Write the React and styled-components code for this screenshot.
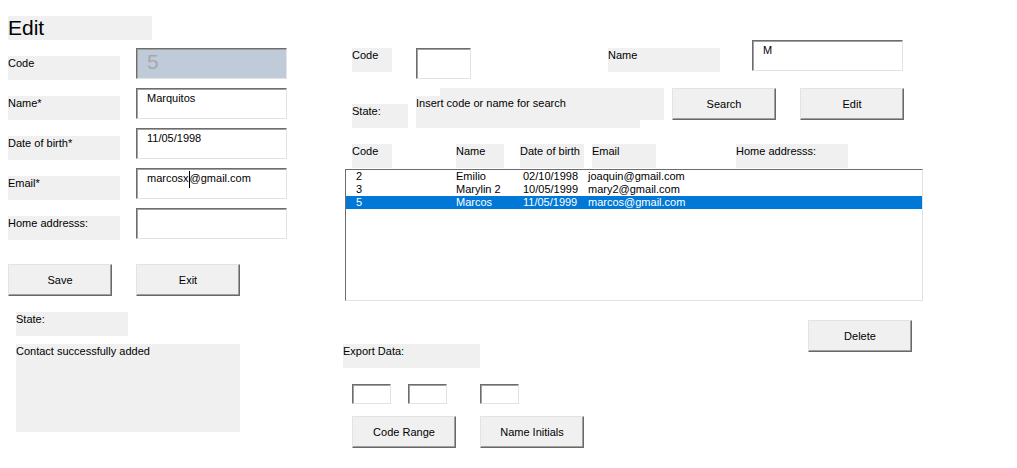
import React from 'react'
import styled, {createGlobalStyle, css} from 'styled-components'

const GlobalStyle = createGlobalStyle`
  html, body {
    margin: 0;
    padding: 0;
    background: #fff;
  }
  body {
    font-family: 'Liberation Sans', Arial, sans-serif;
    font-size: 11px;
    color: #000;
  }
`

// offsets of a control inside its row, as on the original user form
const place = css`
  flex: none;
  box-sizing: border-box;
  margin-left: ${p => p.$ml || 0}px;
  margin-top: ${p => p.$mt || 0}px;
`

const Form = styled.div`
  display: flex;
  width: 1017px;
  height: 468px;
  overflow: hidden;
`
const LeftPane = styled.div`
  width: 335px;
  padding: 16px 0 0 8px;
  display: flex;
  flex-direction: column;
  align-items: flex-start;
`
const RightPane = styled.div`
  flex: 1;
  padding-top: 40px;
  display: flex;
  flex-direction: column;
  align-items: flex-start;
`
const Row = styled.div`
  display: flex;
  align-items: flex-start;
  margin-top: ${p => p.$top || 0}px;
`
const Title = styled.div`
  width: 144px;
  height: 24px;
  background: #f0f0f0;
  font-size: 21px;
  line-height: 24px;
`
const FieldGrid = styled.div`
  margin-top: 8px;
  display: grid;
  grid-template-columns: 112px 151px;
  grid-auto-rows: 31px;
  column-gap: 16px;
  row-gap: 9px;
`
const Label = styled.div`
  ${place}
  width: ${p => p.$w}px;
  height: ${p => p.$h || 24}px;
  padding-top: 1px;
  background: #f0f0f0;
  line-height: 13px;
  white-space: nowrap;
`
const FieldLabel = styled(Label)`
  margin-top: 8px;
`
const StatusBox = styled(Label)`
  box-shadow: 24px -8px 0 #f0f0f0;
`
const TextBox = styled.div`
  ${place}
  width: ${p => p.$w || 151}px;
  height: ${p => p.$h || 31}px;
  padding: 3px 0 0 10px;
  background: ${p => (p.$locked ? '#bfcbd8' : '#fff')};
  border: 1px solid #e3e3e3;
  border-top-color: #6d6d6d;
  border-left-color: #6d6d6d;
  box-shadow: inset 1px 1px 0 #a0a0a0;
  line-height: 13px;
  white-space: nowrap;
`
const LockedValue = styled.span`
  display: block;
  margin-top: -1px;
  font-size: 21px;
  line-height: 21px;
  color: #a8a8a8;
`
const Caret = styled.span`
  display: inline-block;
  width: 1px;
  height: 17px;
  margin-top: -1px;
  vertical-align: top;
  background: #000;
`
const Button = styled.button`
  ${place}
  width: 104px;
  height: 32px;
  padding: 0;
  background: #f0f0f0;
  border: 1px solid;
  border-color: #e3e3e3 #696969 #696969 #e3e3e3;
  box-shadow: inset -1px -1px 0 #a0a0a0;
  font: inherit;
  color: #000;
`
const ListBox = styled.div`
  box-sizing: border-box;
  margin: 1px 0 0 2px;
  width: 578px;
  height: 132px;
  background: #fff;
  border: 1px solid #e3e3e3;
  border-top-color: #6d6d6d;
  border-left-color: #6d6d6d;
`
const ListRow = styled.div`
  display: grid;
  grid-template-columns: 100px 67px 65px 1fr;
  height: 13px;
  padding-left: 10px;
  line-height: 13px;
  white-space: nowrap;
  background: ${p => (p.$selected ? '#0078d7' : 'transparent')};
  color: ${p => (p.$selected ? '#fff' : '#000')};
`

const contacts = [
  {code: 2, name: 'Emilio', birth: '02/10/1998', email: 'joaquin@gmail.com'},
  {code: 3, name: 'Marylin 2', birth: '10/05/1999', email: 'mary2@gmail.com'},
  {code: 5, name: 'Marcos', birth: '11/05/1999', email: 'marcos@gmail.com'}
]

export default function App() {
  return (
    <Form>
      <GlobalStyle />
      <LeftPane>
        <Title>Edit</Title>
        <FieldGrid>
          <FieldLabel>Code</FieldLabel>
          <TextBox $locked><LockedValue>5</LockedValue></TextBox>
          <FieldLabel>Name*</FieldLabel>
          <TextBox>Marquitos</TextBox>
          <FieldLabel>Date of birth*</FieldLabel>
          <TextBox>11/05/1998</TextBox>
          <FieldLabel>Email*</FieldLabel>
          <TextBox>marcosx<Caret />@gmail.com</TextBox>
          <FieldLabel>Home addresss:</FieldLabel>
          <TextBox />
        </FieldGrid>
        <Row $top={25}>
          <Button>Save</Button>
          <Button $ml={24}>Exit</Button>
        </Row>
        <Label $w={112} $ml={8} $mt={16}>State:</Label>
        <Label $w={224} $h={88} $ml={8} $mt={8}>Contact successfully added</Label>
      </LeftPane>

      <RightPane>
        <Row>
          <Label $w={40} $ml={9} $mt={8}>Code</Label>
          <TextBox $w={55} $ml={24} $mt={8} />
          <Label $w={112} $ml={137} $mt={8}>Name</Label>
          <TextBox $ml={32}>M</TextBox>
        </Row>
        <Row $top={9}>
          <Label $w={56} $ml={9} $mt={16}>State:</Label>
          <StatusBox $w={224} $h={32} $ml={8} $mt={8}>Insert code or name for search</StatusBox>
          <Button $ml={32}>Search</Button>
          <Button $ml={24}>Edit</Button>
        </Row>
        <Row $top={16}>
          <Label $w={40} $ml={9}>Code</Label>
          <Label $w={48} $ml={64}>Name</Label>
          <Label $w={64} $ml={16}>Date of birth</Label>
          <Label $w={64} $ml={8}>Email</Label>
          <Label $w={112} $ml={80}>Home addresss:</Label>
        </Row>
        <ListBox>
          {contacts.map(c => (
            <ListRow key={c.code} $selected={c.code === 5}>
              <span>{c.code}</span>
              <span>{c.name}</span>
              <span>{c.birth}</span>
              <span>{c.email}</span>
            </ListRow>
          ))}
        </ListBox>
        <Row $top={19}>
          <Label $w={137} $mt={24}>Export Data:</Label>
          <Button $ml={328}>Delete</Button>
        </Row>
        <Row $top={16}>
          <TextBox $w={39} $h={20} $ml={9} />
          <TextBox $w={39} $h={20} $ml={17} />
          <TextBox $w={39} $h={20} $ml={33} />
        </Row>
        <Row $top={12}>
          <Button $ml={9}>Code Range</Button>
          <Button $ml={24}>Name Initials</Button>
        </Row>
      </RightPane>
    </Form>
  )
}
